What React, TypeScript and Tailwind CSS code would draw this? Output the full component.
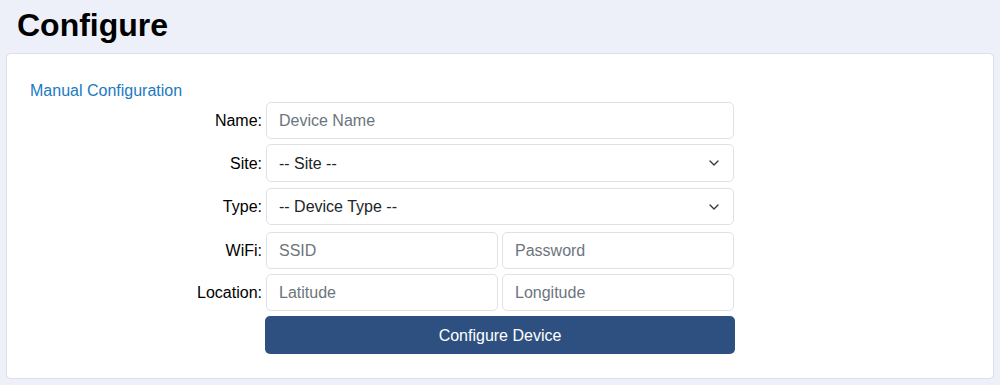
import { ChevronDown } from 'lucide-react';

const inputCls =
  'w-full h-full rounded-[5px] border border-[#dee2e6] bg-white px-3 text-base text-[#212529] placeholder:text-[#6c757d] outline-none';

function Row({ label, className, children }: { label: string; className: string; children: React.ReactNode }) {
  return (
    <div className={'grid grid-cols-[1fr_468px_1fr] ' + className}>
      <div className="flex items-center justify-end pr-1 pt-px text-base text-black">{label}</div>
      {children}
      <div />
    </div>
  );
}

function Select({ label }: { label: string }) {
  return (
    <div className="relative h-full">
      <div className="flex h-full items-center rounded-[5px] border border-[#dee2e6] bg-white px-3 pt-px text-base text-[#212529]">
        {label}
      </div>
      <ChevronDown className="absolute right-[12px] top-1/2 -translate-y-1/2 text-[#343a40]" size={16} strokeWidth={2} />
    </div>
  );
}

export default function App() {
  return (
    <div className="min-h-[385px] bg-[#edf0f8] font-['Liberation_Sans',Arial,sans-serif]">
      <h1 className="px-[17px] pt-[3px] text-[32px] font-bold leading-[44px] text-black">Configure</h1>
      <div className="mx-[6px] mt-[6px] h-[326px] rounded-[5px] border border-[#dcdfe6] bg-white">
        <div className="pl-[23px] pt-[27px] text-base leading-[20px] text-[#1a7abf]">Manual Configuration</div>
        <div className="mt-[1px] flex flex-col">
          <Row label="Name:" className="h-[37px]">
            <input className={inputCls + ' pt-px'} placeholder="Device Name" />
          </Row>
          <Row label="Site:" className="mt-[5px] h-[38px]">
            <Select label="-- Site --" />
          </Row>
          <Row label="Type:" className="mt-[6px] h-[37px]">
            <Select label="-- Device Type --" />
          </Row>
          <Row label="WiFi:" className="mt-[7px] h-[37px]">
            <div className="grid grid-cols-2 gap-1">
              <input className={inputCls + ' pt-px'} placeholder="SSID" />
              <input className={inputCls + ' pt-px'} placeholder="Password" />
            </div>
          </Row>
          <Row label="Location:" className="mt-[5px] h-[37px]">
            <div className="grid grid-cols-2 gap-1">
              <input className={inputCls + ' pt-px'} placeholder="Latitude" />
              <input className={inputCls + ' pt-px'} placeholder="Longitude" />
            </div>
          </Row>
          <div className="mt-[5px] grid h-[38px] grid-cols-[1fr_468px_1fr]">
            <div />
            <button className="mx-[-1px] rounded-[5px] bg-[#2e5080] pt-px text-base text-white">Configure Device</button>
            <div />
          </div>
        </div>
      </div>
    </div>
  );
}
